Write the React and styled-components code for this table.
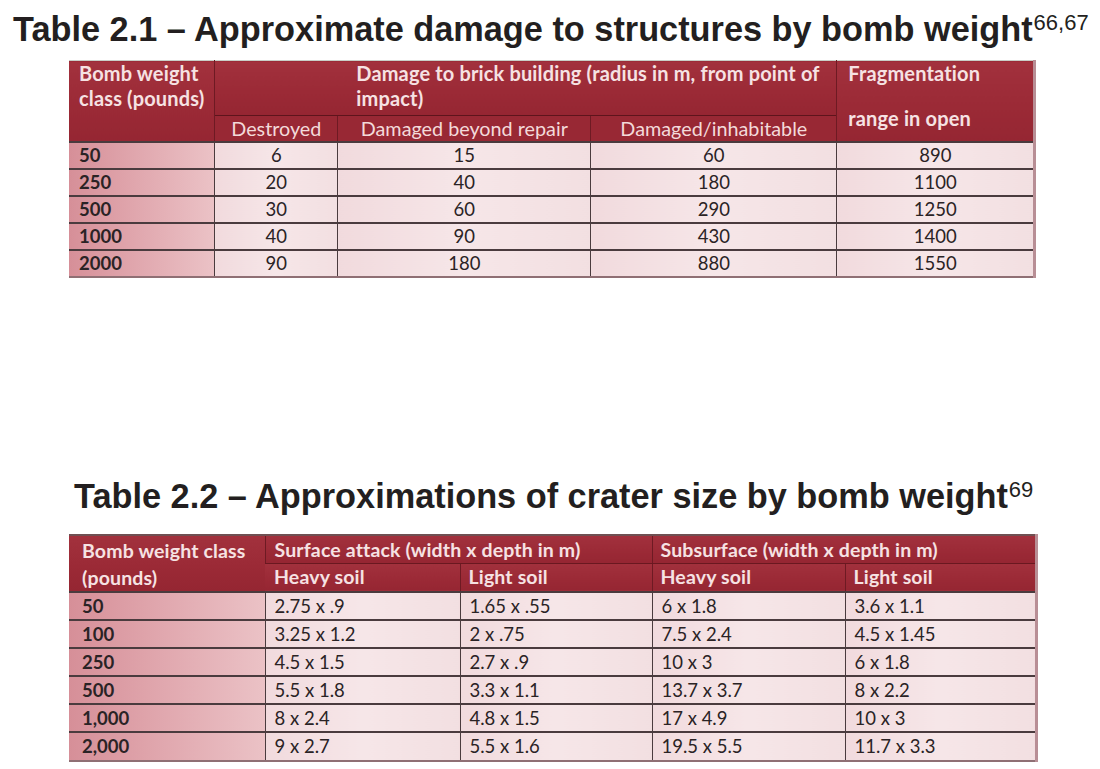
import React from "react";
import styled, { createGlobalStyle } from "styled-components";

const damageRows = [
  ["50", "6", "15", "60", "890"],
  ["250", "20", "40", "180", "1100"],
  ["500", "30", "60", "290", "1250"],
  ["1000", "40", "90", "430", "1400"],
  ["2000", "90", "180", "880", "1550"],
];

const craterRows = [
  ["50", "2.75 x .9", "1.65 x .55", "6 x 1.8", "3.6 x 1.1"],
  ["100", "3.25 x 1.2", "2 x .75", "7.5 x 2.4", "4.5 x 1.45"],
  ["250", "4.5 x 1.5", "2.7 x .9", "10 x 3", "6 x 1.8"],
  ["500", "5.5 x 1.8", "3.3 x 1.1", "13.7 x 3.7", "8 x 2.2"],
  ["1,000", "8 x 2.4", "4.8 x 1.5", "17 x 4.9", "10 x 3"],
  ["2,000", "9 x 2.7", "5.5 x 1.6", "19.5 x 5.5", "11.7 x 3.3"],
];

function App() {
  return (
    <Page>
      <GlobalStyle />
      <Title $indent={13}>
        Table 2.1 – Approximate damage to structures by bomb weight
        <Sup>66,67</Sup>
      </Title>
      <Table $top={11}>
        <colgroup>
          <col style={{ width: 145 }} />
          <col style={{ width: 123 }} />
          <col style={{ width: 253 }} />
          <col style={{ width: 246 }} />
          <col style={{ width: 198 }} />
        </colgroup>
        <thead>
          <HeadRow $h={55}>
            <HeadCell rowSpan={2} $pad="0 10px">
              Bomb weight
              <br />
              class (pounds)
            </HeadCell>
            <HeadCell colSpan={3} $pad="0 10px 0 141px">
              Damage to brick building (radius in m, from point of
              <br />
              impact)
            </HeadCell>
            <HeadCell rowSpan={2} $pad="0 10px 0 11px">
              <Line>Fragmentation</Line>
              <Line $gap={20}>range in open</Line>
            </HeadCell>
          </HeadRow>
          <HeadRow $h={26}>
            <SubHead>Destroyed</SubHead>
            <SubHead>Damaged beyond repair</SubHead>
            <SubHead>Damaged/inhabitable</SubHead>
          </HeadRow>
        </thead>
        <tbody>
          {damageRows.map((row) => (
            <BodyRow key={row[0]} $h={27}>
              <KeyCell $pad={10}>{row[0]}</KeyCell>
              {row.slice(1).map((v, i) => (
                <ValueCell key={i} $align="center">
                  {v}
                </ValueCell>
              ))}
            </BodyRow>
          ))}
        </tbody>
      </Table>

      <Title $indent={74} $top={198}>
        Table 2.2 – Approximations of crater size by bomb weight
        <Sup>69</Sup>
      </Title>
      <Table $top={18} $edge>
        <colgroup>
          <col style={{ width: 196 }} />
          <col style={{ width: 195 }} />
          <col style={{ width: 192 }} />
          <col style={{ width: 193 }} />
          <col style={{ width: 191 }} />
        </colgroup>
        <thead>
          <HeadRow $h={28}>
            <HeadCell rowSpan={2} $pad="1px 13px 0" $lh={27} $size={19.5}>
              Bomb weight class
              <br />
              (pounds)
            </HeadCell>
            <HeadCell colSpan={2} $pad="2px 9px 0" $lh={24} $size={19.5} $under>
              Surface attack (width x depth in m)
            </HeadCell>
            <HeadCell colSpan={2} $pad="2px 8px 0" $lh={24} $size={19.5} $under>
              Subsurface (width x depth in m)
            </HeadCell>
          </HeadRow>
          <HeadRow $h={28}>
            <HeadCell $pad="1px 9px 0" $lh={24} $size={19.5}>Heavy soil</HeadCell>
            <HeadCell $pad="1px 8px 0" $lh={24} $size={19.5}>Light soil</HeadCell>
            <HeadCell $pad="1px 8px 0" $lh={24} $size={19.5}>Heavy soil</HeadCell>
            <HeadCell $pad="1px 8px 0" $lh={24} $size={19.5}>Light soil</HeadCell>
          </HeadRow>
        </thead>
        <tbody>
          {craterRows.map((row) => (
            <BodyRow key={row[0]} $h={28}>
              <KeyCell $pad={13}>{row[0]}</KeyCell>
              {row.slice(1).map((v, i) => (
                <ValueCell key={i} $align="left">
                  {v}
                </ValueCell>
              ))}
            </BodyRow>
          ))}
        </tbody>
      </Table>
    </Page>
  );
}

export default App;

///////////////////////////////////////////////////////////////////////////
//////  STYLED COMPONENTS

const GlobalStyle = createGlobalStyle`
  html, body {
    margin: 0;
    background: #ffffff;
  }
  * {
    box-sizing: border-box;
  }
`;

const Page = styled.div`
  width: 1100px;
  height: 769px;
  padding-top: 9px;
  overflow: hidden;
  display: flex;
  flex-direction: column;
  align-items: flex-start;
`;

const Title = styled.h1`
  margin: ${(p) => p.$top || 0}px 0 0 ${(p) => p.$indent}px;
  font-family: "Liberation Sans", Arial, sans-serif;
  font-weight: 700;
  font-size: 34.3px;
  line-height: 40px;
  color: #231f20;
  white-space: nowrap;
`;

const Sup = styled.sup`
  font-size: 22px;
  font-weight: 400;
  line-height: 0;
  vertical-align: 11px;
  margin-left: 1px;
`;

const Table = styled.table`
  margin: ${(p) => p.$top}px 0 0 69px;
  border-collapse: collapse;
  table-layout: fixed;
  font-family: Lato, "Open Sans", sans-serif;
  font-size: 18.5px;
  color: #2a2325;
  border-top: ${(p) => (p.$edge ? "2px solid #6f5052" : "1px solid #c9cfc8")};
  border-right: 3px solid #b88e95;
  border-bottom: 2px solid #8f6f74;
`;

const HeadRow = styled.tr`
  height: ${(p) => p.$h}px;
`;

const HeadCell = styled.th`
  padding: ${(p) => p.$pad};
  vertical-align: top;
  text-align: left;
  font-weight: 700;
  font-size: ${(p) => p.$size || 20}px;
  letter-spacing: 0.15px;
  line-height: ${(p) => p.$lh || 25}px;
  color: #f6e2e3;
  white-space: nowrap;
  background: linear-gradient(180deg, #a2313d 0%, #9b2a36 55%, #952632 100%);
  border-left: 1px solid #6e1a23;
  border-bottom: ${(p) => (p.$under ? "1px solid #6a1820" : "0")};

  &:first-child {
    border-left: 0;
  }
`;

const Line = styled.span`
  display: block;
  margin-top: ${(p) => p.$gap || 0}px;
`;

const SubHead = styled.th`
  padding: 0 4px;
  vertical-align: middle;
  text-align: center;
  font-weight: 400;
  font-size: 19.8px;
  line-height: 24px;
  color: #f3dada;
  white-space: nowrap;
  background: #982834;
  border-top: 1px solid #5e141c;
  border-left: 1px solid #6e1a23;
`;

const BodyRow = styled.tr`
  height: ${(p) => p.$h}px;
  border-top: 2px solid #4a3b3e;
`;

const KeyCell = styled.td`
  padding: 0 6px 0 ${(p) => p.$pad}px;
  font-weight: 700;
  line-height: 22px;
  white-space: nowrap;
  background: linear-gradient(90deg, #d68f98 0%, #e0a6ad 45%, #ebc2c6 100%);
`;

const ValueCell = styled.td`
  padding: 0 9px;
  text-align: ${(p) => p.$align};
  line-height: 22px;
  white-space: nowrap;
  background: linear-gradient(90deg, #f1dadd 0%, #f6e6e8 50%, #f2dfe1 100%);
  border-left: 1.5px solid #4a3b3e;
`;
